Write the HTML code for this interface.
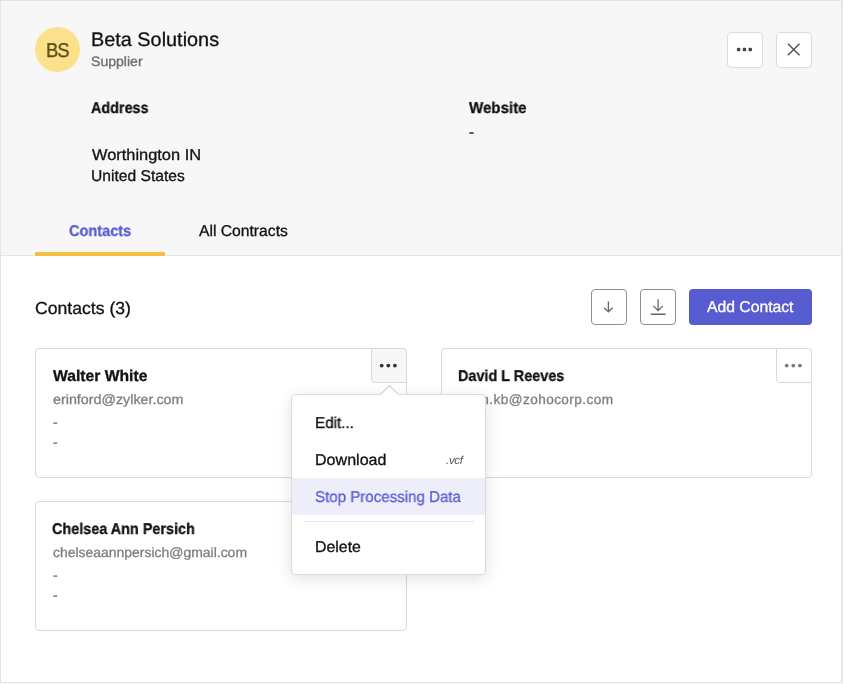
<!DOCTYPE html>
<html lang="en">
<head>
<meta charset="utf-8">
<title>Beta Solutions</title>
<style>
*{box-sizing:border-box;margin:0;padding:0}
html,body{width:843px;height:684px;overflow:hidden;background:#f8f8f8}
#edge{position:absolute;left:842px;top:0;width:1px;height:684px;background:#eeeeee}
body{font-family:"Liberation Sans",sans-serif;color:#111;position:relative}
#frame{position:absolute;left:0;top:0;width:842px;height:683px;border:1px solid #e4e4e4;background:#fff;overflow:hidden}
#head{position:absolute;left:0;top:0;width:840px;height:255px;background:#f7f7f7;border-bottom:1px solid #e6e6e6}
.t{position:absolute;white-space:nowrap;line-height:20px;will-change:transform;-webkit-text-stroke:0.3px;text-rendering:geometricPrecision}
.b{font-weight:bold}
#avatar{position:absolute;left:34px;top:26px;width:45px;height:45px;border-radius:50%;background:#fbe18b}
.sqbtn{position:absolute;width:36px;height:36px;background:#fff;border:1px solid #dcdcdc;border-radius:4px}
.sqbtn.dark{border-color:#8f8f8f}
.sqbtn svg{position:absolute;left:-1px;top:-1px}
.card{position:absolute;width:372px;height:130px;background:#fff;border:1px solid #d8d8d8;border-radius:4px}
.morebtn{position:absolute;right:-1px;top:-1px;width:36px;height:35px;border:1px solid #d8d8d8;border-radius:0 4px 0 4px;background:#fff}
.morebtn svg{position:absolute;left:-1px;top:-1px}
.morebtn.on{background:#f7f7f7}
#tabbar{position:absolute;left:34px;top:251px;width:130px;height:4px;background:#f4c041}
#addbtn{position:absolute;left:688px;top:288px;width:123px;height:36px;border-radius:4px;background:#575cd1}
#pop{position:absolute;left:290px;top:393px;width:195px;height:181px;background:#fff;border:1px solid #dcdcdc;border-radius:4px;box-shadow:0 4px 16px rgba(0,0,0,.12)}
#pop .hl{position:absolute;left:0;top:83px;width:193px;height:37px;background:#eeeefb}
#pop .sep{position:absolute;left:12px;top:126px;width:170px;height:1px;background:#e6e6e6}
#arrow{position:absolute;left:379px;top:383px}
</style>
</head>
<body>
<div id="edge"></div>
<div id="frame">
  <div id="head"></div>
  <div id="avatar"></div>
  <div class="t" style="left:44.5px;top:40px;font-size:20px;color:#5b4a12;letter-spacing:-1.2px;transform:scaleX(0.92);transform-origin:0 0">BS</div>
  <div class="t" style="left:90px;top:29px;font-size:19.6px;color:#111;transform:scaleX(1.0135);transform-origin:0 0">Beta Solutions</div>
  <div class="t" style="left:90px;top:51px;font-size:13.6px;color:#6c6c6c;transform:scaleX(1.0351);transform-origin:0 0">Supplier</div>

  <div class="sqbtn" style="left:726px;top:31px"><svg width="36" height="36" viewBox="0 0 36 36"><g fill="#444"><rect x="9.9" y="15.8" width="3.5" height="3.5" rx="1.3"/><rect x="15.7" y="15.8" width="3.5" height="3.5" rx="1.3"/><rect x="21.5" y="15.8" width="3.5" height="3.5" rx="1.3"/></g></svg></div>
  <div class="sqbtn" style="left:775px;top:31px"><svg width="36" height="36" viewBox="0 0 36 36"><path d="M11.9 11.7 L23.5 23.3 M23.5 11.7 L11.9 23.3" stroke="#555" stroke-width="1.5" fill="none"/></svg></div>

  <div class="t b" style="left:90px;top:98px;font-size:15.6px;transform:scaleX(0.9216);transform-origin:0 0">Address</div>
  <div class="t" style="left:91px;top:145px;font-size:15.6px;transform:scaleX(1.0514);transform-origin:0 0">Worthington IN</div>
  <div class="t" style="left:90px;top:166px;font-size:15.6px;transform:scaleX(1.0021);transform-origin:0 0">United States</div>
  <div class="t b" style="left:468px;top:98px;font-size:15.6px;transform:scaleX(0.9668);transform-origin:0 0">Website</div>
  <div class="t" style="left:468px;top:122px;font-size:15px">-</div>

  <div class="t b" style="left:68px;top:221px;font-size:15.6px;color:#5a5fd0;transform:scaleX(0.9330);transform-origin:0 0">Contacts</div>
  <div class="t" style="left:198px;top:221px;font-size:15.6px;transform:scaleX(1.0049);transform-origin:0 0">All Contracts</div>
  <div id="tabbar"></div>

  <div class="t" style="left:34px;top:297px;font-size:17.4px;transform:scaleX(1.0125);transform-origin:0 0">Contacts (3)</div>
  <div class="sqbtn dark" style="left:590px;top:288px"><svg width="36" height="36" viewBox="0 0 36 36"><path d="M17.4 12.6 V23 M13.2 18.7 L17.4 22.9 L21.6 18.7" stroke="#666" stroke-width="1.3" fill="none"/></svg></div>
  <div class="sqbtn dark" style="left:639px;top:288px"><svg width="36" height="36" viewBox="0 0 36 36"><path d="M18.1 10.3 V21.6 M13.4 16.9 L18.1 21.6 L22.8 16.9 M10.8 25.25 H25.6" stroke="#666" stroke-width="1.3" fill="none"/></svg></div>
  <div id="addbtn"></div>
  <div class="t" style="left:706px;top:297px;font-size:15.6px;color:#fff;transform:scaleX(1.0078);transform-origin:0 0">Add Contact</div>

  <div class="card" style="left:34px;top:347px"><div class="morebtn on"><svg width="36" height="36" viewBox="0 0 36 36"><g fill="#333"><circle cx="10.7" cy="17.6" r="1.9"/><circle cx="17.3" cy="17.6" r="1.9"/><circle cx="23.9" cy="17.6" r="1.9"/></g></svg></div></div>
  <div class="t b" style="left:52px;top:366px;font-size:15.6px;transform:scaleX(1.0057);transform-origin:0 0">Walter White</div>
  <div class="t" style="left:52px;top:389px;font-size:13.6px;color:#7e7e7e;transform:scaleX(1.0511);transform-origin:0 0">erinford@zylker.com</div>
  <div class="t" style="left:52px;top:411px;font-size:14px;color:#7e7e7e">-</div>
  <div class="t" style="left:52px;top:431px;font-size:14px;color:#7e7e7e">-</div>

  <div class="card" style="left:440px;top:347px;width:371px"><div class="morebtn"><svg width="36" height="36" viewBox="0 0 36 36"><g fill="#7a7a7a"><circle cx="10.7" cy="17.6" r="1.9"/><circle cx="17.3" cy="17.6" r="1.9"/><circle cx="23.9" cy="17.6" r="1.9"/></g></svg></div></div>
  <div class="t b" style="left:457px;top:366px;font-size:15.6px;transform:scaleX(0.9243);transform-origin:0 0">David L Reeves</div>
  <div class="t" style="left:458px;top:389px;font-size:13.6px;color:#7e7e7e"><span style="display:inline-block;width:30.3px;text-align:right;letter-spacing:0.5px">john</span><span style="letter-spacing:0.43px">.kb@zohocorp.com</span></div>
  <div class="t" style="left:458px;top:411px;font-size:14px;color:#7e7e7e">-</div>
  <div class="t" style="left:458px;top:431px;font-size:14px;color:#7e7e7e">-</div>

  <div class="card" style="left:34px;top:500px"><div class="morebtn"><svg width="36" height="36" viewBox="0 0 36 36"><g fill="#7a7a7a"><circle cx="10.7" cy="17.6" r="1.9"/><circle cx="17.3" cy="17.6" r="1.9"/><circle cx="23.9" cy="17.6" r="1.9"/></g></svg></div></div>
  <div class="t b" style="left:51px;top:519px;font-size:15.6px;transform:scaleX(0.9245);transform-origin:0 0">Chelsea Ann Persich</div>
  <div class="t" style="left:52px;top:542px;font-size:13.6px;color:#7e7e7e;transform:scaleX(1.0259);transform-origin:0 0">chelseaannpersich@gmail.com</div>
  <div class="t" style="left:52px;top:564px;font-size:14px;color:#7e7e7e">-</div>
  <div class="t" style="left:52px;top:584px;font-size:14px;color:#7e7e7e">-</div>

  <div id="pop">
    <div class="hl"></div>
    <div class="sep"></div>
    <div class="t" style="left:23px;top:19px;font-size:15.6px;transform:scaleX(0.9762);transform-origin:0 0">Edit...</div>
    <div class="t" style="left:23px;top:56px;font-size:15.6px;transform:scaleX(1.0301);transform-origin:0 0">Download</div>
    <div class="t" style="left:154px;top:56px;font-size:11.5px;font-style:italic;color:#555;letter-spacing:-0.3px;-webkit-text-stroke:0">.vcf</div>
    <div class="t" style="left:23px;top:93px;font-size:15.6px;color:#5a5fd0;transform:scaleX(0.9668);transform-origin:0 0">Stop Processing Data</div>
    <div class="t" style="left:23px;top:143px;font-size:15.6px;transform:scaleX(1.0196);transform-origin:0 0">Delete</div>
  </div>
  <svg id="arrow" width="19" height="11" viewBox="0 0 19 11"><path d="M0.5 10.5 L9.5 1.5 L18.5 10.5" fill="#fff" stroke="#d2d2d2" stroke-width="1.2"/><path d="M1.2 10.5 H17.8" stroke="#fff" stroke-width="1.4"/></svg>
</div>
</body>
</html>
